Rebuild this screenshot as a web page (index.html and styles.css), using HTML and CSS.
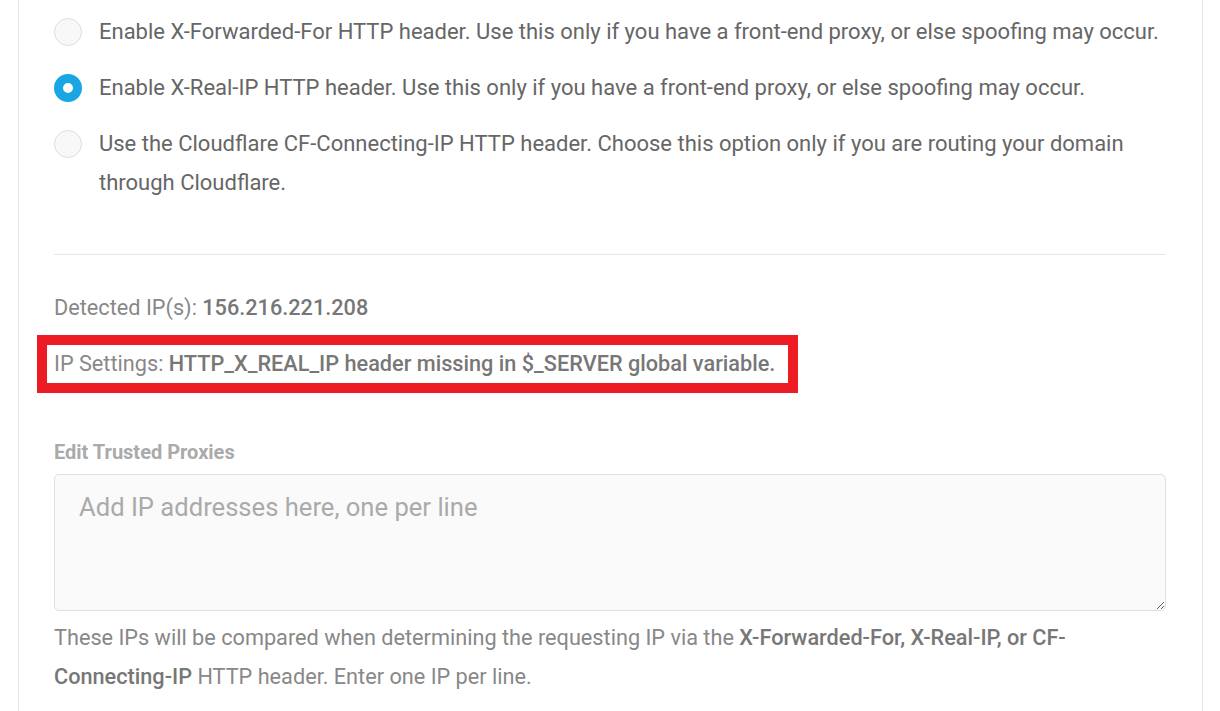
FILE: index.html
```html
<!DOCTYPE html>
<html lang="en">
<head>
	<meta charset="UTF-8">
	<title>IP Settings</title>
	<link rel="stylesheet" href="styles.css">
</head>
<body>
	<div class="panel">
		<ul class="radio-list">
			<li>
				<span class="radio"></span>
				<span class="radio-text">Enable X-Forwarded-For HTTP header. Use this only if you have a front-end proxy, or else spoofing may occur.</span>
			</li>
			<li>
				<span class="radio checked"></span>
				<span class="radio-text">Enable X-Real-IP HTTP header. Use this only if you have a front-end proxy, or else spoofing may occur.</span>
			</li>
			<li>
				<span class="radio"></span>
				<span class="radio-text">Use the Cloudflare CF-Connecting-IP HTTP header. Choose this option only if you are routing your domain through Cloudflare.</span>
			</li>
		</ul>

		<hr class="divider">

		<p class="info">Detected IP(s): <strong>156.216.221.208</strong></p>
		<p class="info"><span class="highlight">IP Settings: <strong>HTTP_X_REAL_IP header missing in $_SERVER global variable.</strong></span></p>

		<label class="field-label" for="proxies">Edit Trusted Proxies</label>
		<textarea id="proxies" class="field" placeholder="Add IP addresses here, one per line"></textarea>
		<p class="help">These IPs will be compared when determining the requesting IP via the <strong>X-Forwarded-For, X-Real-IP, or CF-Connecting-IP</strong> HTTP header. Enter one IP per line.</p>
	</div>
</body>
</html>
```

FILE: styles.css
```css
body {
	margin: 0;
	padding: 0;
	background-color: #fff;
	font-family: Roboto, "Liberation Sans", sans-serif;
}
ul {
	padding: 0;
	margin: 0;
	list-style-type: none;
}

/*白色面板，上下延伸出截图*/
.panel {
	margin: -8px 17px 0 18px;
	padding: 19px 36px 30px 35px;
	border: 1px solid #e6e6e6;
	border-bottom: none;
	min-height: 720px;
}

/*单选列表*/
.radio-list li {
	display: flex;
	align-items: flex-start;
	margin-bottom: 17px;
}
.radio {
	flex: none;
	box-sizing: border-box;
	width: 28px;
	height: 28px;
	margin: 6px 17px 0 0;
	border: 1px solid #dedede;
	border-radius: 50%;
	background-color: #f8f8f8;
}
.radio.checked {
	border: 9px solid #1aa6e4;
	background-color: #fff;
}
.radio-text {
	font-size: 22px;
	line-height: 39px;
	color: #666;
}

.divider {
	margin: 52px 0 33px;
	border: none;
	border-top: 1px solid #e6e6e6;
}

.info {
	margin: 0 0 8px;
	font-size: 21.7px;
	line-height: 39px;
	color: #888;
}
.info strong {
	font-weight: 500;
	color: #777;
}
/*红色标注框*/
.highlight {
	display: inline-block;
	margin-left: -17px;
	padding: 0 13px 0 7px;
	line-height: 38px;
	border: 10px solid #ed1c24;
}

.field-label {
	display: block;
	margin-top: 47px;
	font-size: 20px;
	font-weight: bold;
	color: #aaa;
}
.field {
	display: block;
	box-sizing: border-box;
	width: 100%;
	height: 137px;
	margin-top: 10px;
	padding: 17px 24px;
	border: 1px solid #e0e0e0;
	border-radius: 5px;
	background-color: #fafafa;
	font-family: Roboto, "Liberation Sans", sans-serif;
	font-size: 25.6px;
	color: #666;
}
.field::placeholder {
	color: #aaa;
}
.help {
	margin: 7px 0 0;
	font-size: 21.7px;
	line-height: 39px;
	color: #888;
}
.help strong {
	font-weight: 500;
	color: #777;
}
```
